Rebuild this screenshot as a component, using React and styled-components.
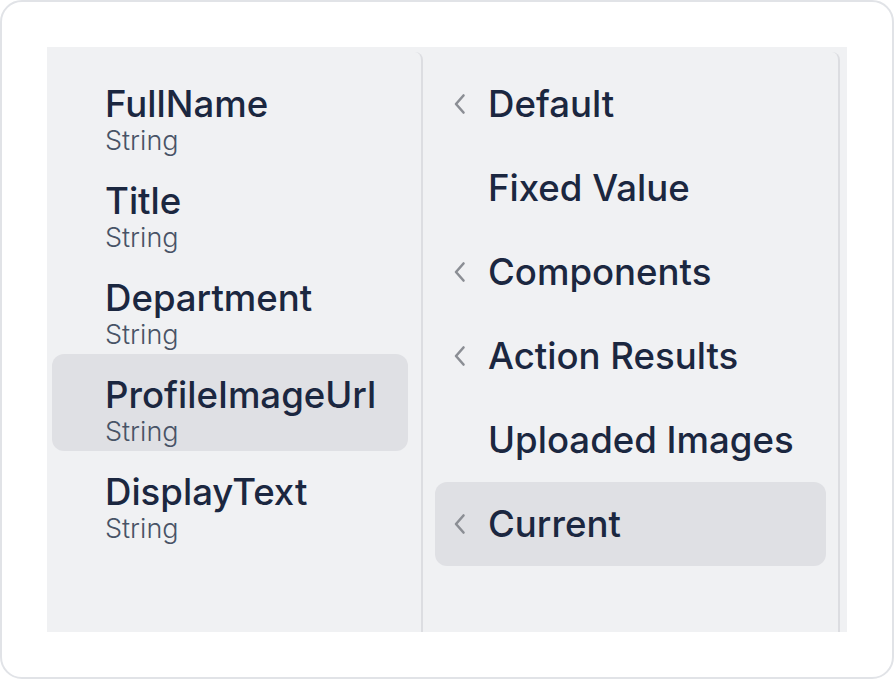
import React from "react";
import styled, { createGlobalStyle } from "styled-components";

const fields = [
  { name: "FullName", type: "String" },
  { name: "Title", type: "String" },
  { name: "Department", type: "String" },
  { name: "ProfileImageUrl", type: "String", active: true },
  { name: "DisplayText", type: "String" },
];

const sources = [
  { label: "Default", nested: true },
  { label: "Fixed Value" },
  { label: "Components", nested: true },
  { label: "Action Results", nested: true },
  { label: "Uploaded Images" },
  { label: "Current", nested: true, active: true },
];

function Chevron() {
  return (
    <svg width="16" height="22" viewBox="0 0 16 22" fill="none">
      <path
        d="M12.5 2.5L5 11L12.5 19.5"
        stroke="#8b8e94"
        strokeWidth="2.6"
        strokeLinecap="round"
        strokeLinejoin="round"
      />
    </svg>
  );
}

export default function App() {
  return (
    <>
      <GlobalStyle />
      <Card>
        <Panel>
          <FieldColumn>
            {fields.map((f) => (
              <FieldItem key={f.name} $active={f.active}>
                <FieldName>{f.name}</FieldName>
                <FieldType>{f.type}</FieldType>
              </FieldItem>
            ))}
          </FieldColumn>
          <SourceColumn>
            {sources.map((s) => (
              <SourceItem key={s.label} $active={s.active}>
                <ChevronSlot>{s.nested && <Chevron />}</ChevronSlot>
                <SourceLabel>{s.label}</SourceLabel>
              </SourceItem>
            ))}
          </SourceColumn>
        </Panel>
      </Card>
    </>
  );
}

const GlobalStyle = createGlobalStyle`
  html, body {
    margin: 0;
    padding: 0;
    background: #ffffff;
    font-family: Inter, "Noto Sans", sans-serif;
  }
  * {
    box-sizing: border-box;
  }
`;

const Card = styled.div`
  width: 894px;
  height: 679px;
  background: #fff;
  border: 2px solid #e1e3e7;
  border-radius: 22px;
  padding: 45px;
`;

const Panel = styled.div`
  width: 800px;
  height: 585px;
  background: #f0f1f3;
  display: flex;
  padding-top: 5px;
`;

const FieldColumn = styled.div`
  width: 376px;
  border-right: 2px solid #dcdde1;
  border-top-right-radius: 8px;
  padding: 11px 13px 0 5px;
  display: flex;
  flex-direction: column;
`;

const FieldItem = styled.div`
  height: 97px;
  padding: 23px 0 0 53px;
  border-radius: 12px;
  background: ${(p) => (p.$active ? "#dfe0e4" : "transparent")};
  display: flex;
  flex-direction: column;
`;

const FieldName = styled.div`
  font-size: 36.6px;
  font-weight: 500;
  line-height: 37px;
  color: #1b2740;
`;

const FieldType = styled.div`
  font-size: 27px;
  font-weight: 300;
  line-height: 27px;
  margin-top: 4px;
  color: #485366;
`;

const SourceColumn = styled.div`
  width: 417px;
  border-right: 2px solid #dcdde1;
  border-top-right-radius: 8px;
  padding: 10px 12px 0 12px;
  display: flex;
  flex-direction: column;
`;

const SourceItem = styled.div`
  height: 84px;
  display: flex;
  align-items: center;
  padding-left: 16px;
  border-radius: 12px;
  background: ${(p) => (p.$active ? "#dfe0e4" : "transparent")};
`;

const ChevronSlot = styled.div`
  width: 37px;
  display: flex;
  align-items: center;
`;

const SourceLabel = styled.div`
  font-size: 36.6px;
  font-weight: 500;
  line-height: 37px;
  color: #1b2740;
`;
